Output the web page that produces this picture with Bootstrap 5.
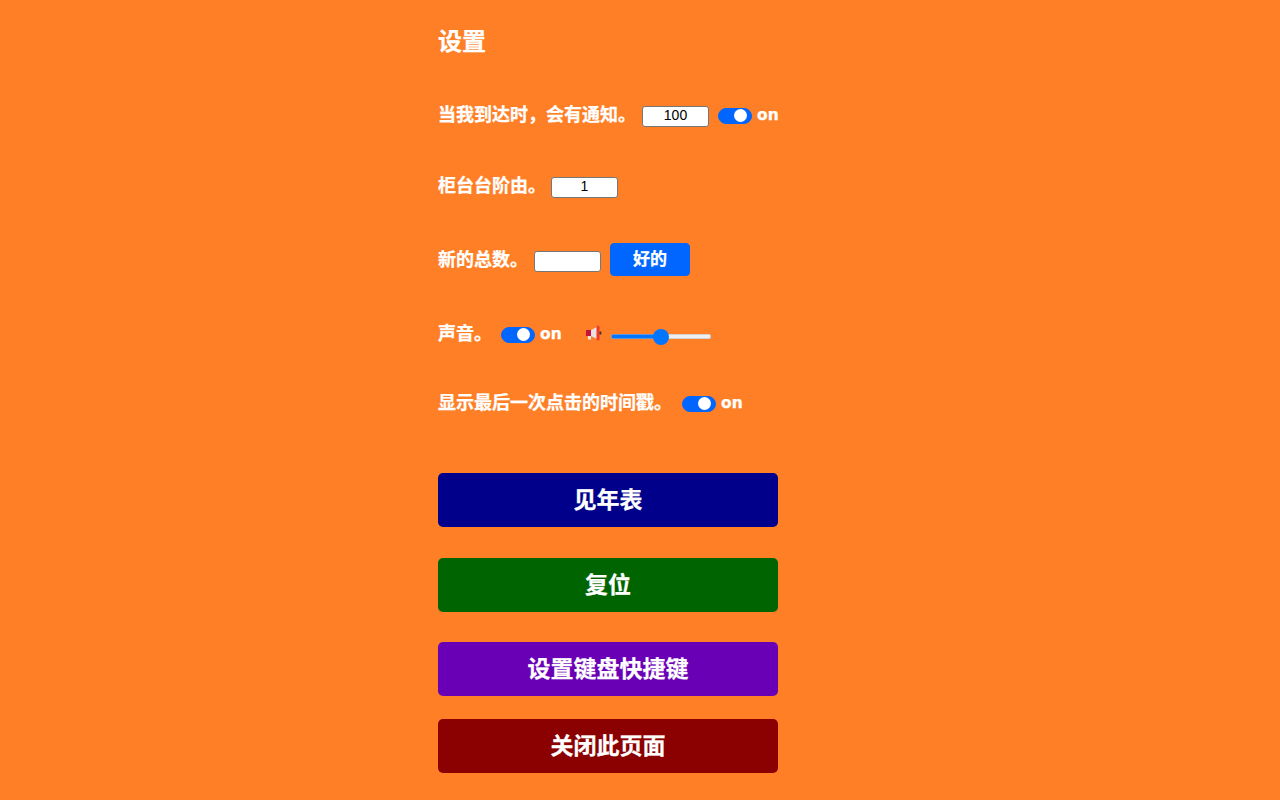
<!DOCTYPE html>
<html lang="zh">
<head>
<meta charset="utf-8">
<title>设置</title>
<link rel="stylesheet" href="https://cdn.jsdelivr.net/npm/bootstrap@5.3.0/dist/css/bootstrap.min.css">
<style>
html,body{height:800px;overflow:hidden}
body{background:#ff7f27;color:#fff;font-family:"Liberation Sans","Noto Sans CJK SC",sans-serif;font-weight:700;-webkit-text-stroke:.25px #fff}
.panel{width:340px;margin-left:438px}
.ttl{font-size:24px;line-height:28px;font-weight:700;margin:0;padding-top:28px}
.setrow{display:flex;align-items:center;font-size:18px;line-height:24px;white-space:nowrap}
.r1{margin-top:47px}.r2{margin-top:47px}.r3{margin-top:45px}.r4{margin-top:46px}.r5{margin-top:45px}
.numbox{width:67px;height:21px;border:1px solid #767676;border-radius:3px;background:#fff;color:#000;font:400 14px "Liberation Sans",sans-serif;text-align:center;padding:0 2px 3px;margin:3px 0 0 6px;-webkit-text-stroke:0}
.r2 .numbox{margin-left:5px}
.okbtn{width:80px;height:33px;margin-left:9px;padding:0;font-size:17px;font-weight:700;line-height:1;border-radius:4px;background:#06f;border-color:#06f}
.form-switch.sw{padding:0;margin:2px 0 0 9px;min-height:0;display:flex;align-items:center;height:17px}
.r5 .form-switch.sw{margin-left:10px}
.form-switch.sw .form-check-input,.form-switch.sw .form-check-input:checked{width:33.6px;height:16.8px;margin:0;float:none;background-color:#06f;border-color:#06f;background-image:url("data:image/svg+xml,%3csvg xmlns='http://www.w3.org/2000/svg' viewBox='-4 -4 8 8'%3e%3ccircle r='4' fill='%23fff'/%3e%3c/svg%3e");background-size:13px 13px;background-position:15px center}
.onlbl{font-family:"DejaVu Sans",sans-serif;font-size:15.5px;margin-left:5.5px;line-height:18px;margin-top:-1px}
.horn{width:18px;height:16px;margin-left:23px;margin-top:-2px}
.vol{appearance:none;-webkit-appearance:none;width:100px;height:16px;margin-left:8px;margin-top:5px;background:transparent}
.vol::-webkit-slider-runnable-track{height:5px;border-radius:3px;background:linear-gradient(to right,#0075ff 50%,#efefef 50%);box-shadow:0 0 0 .5px #b5b5b5 inset}
.vol::-webkit-slider-thumb{-webkit-appearance:none;width:16px;height:16px;border-radius:50%;background:#0075ff;margin-top:-5.500px}
.bigbtn{display:block;width:340px;height:54px;border:0;border-radius:5px;color:#fff;font-size:23px;font-weight:700;padding:0;line-height:1}
.b1{background:#00008b;margin-top:58px}.b2{background:#006400;margin-top:31px}.b3{background:#6a00b5;margin-top:30px}.b4{background:#8b0000;margin-top:23px}
</style>
</head>
<body>
<main class="panel">
<h1 class="ttl">设置</h1>
<div class="setrow r1"><span>当我到达时，会有通知。</span><input class="numbox" type="text" value="100"><div class="form-check form-switch sw"><input class="form-check-input" type="checkbox" role="switch" checked></div><span class="onlbl">on</span></div>
<div class="setrow r2"><span>柜台台阶由。</span><input class="numbox" type="text" value="1"></div>
<div class="setrow r3"><span>新的总数。</span><input class="numbox" type="text"><button class="btn btn-primary okbtn" type="button">好的</button></div>
<div class="setrow r4"><span>声音。</span><div class="form-check form-switch sw"><input class="form-check-input" type="checkbox" role="switch" checked></div><span class="onlbl">on</span>
<svg class="horn" viewBox="0 0 18 16" aria-hidden="true"><rect x="1" y="5" width="5" height="6" fill="#c8103e"/><path d="M6 5 12 2V14L6 11Z" fill="#e8e3e0"/><rect x="3" y="11" width="3" height="3.500" fill="#f0e6dc"/><rect x="11.500" y="0.500" width="3" height="15" rx="1.500" fill="#f0392b"/><rect x="14.500" y="6.500" width="1.800" height="3" fill="#333"/></svg>
<input class="vol" type="range" min="0" max="100" value="50"></div>
<div class="setrow r5"><span>显示最后一次点击的时间戳。</span><div class="form-check form-switch sw"><input class="form-check-input" type="checkbox" role="switch" checked></div><span class="onlbl">on</span></div>
<button class="bigbtn b1" type="button">见年表</button>
<button class="bigbtn b2" type="button">复位</button>
<button class="bigbtn b3" type="button">设置键盘快捷键</button>
<button class="bigbtn b4" type="button">关闭此页面</button>
</main>
<script src="https://cdn.jsdelivr.net/npm/bootstrap@5.3.0/dist/js/bootstrap.bundle.min.js"></script>
</body>
</html>
